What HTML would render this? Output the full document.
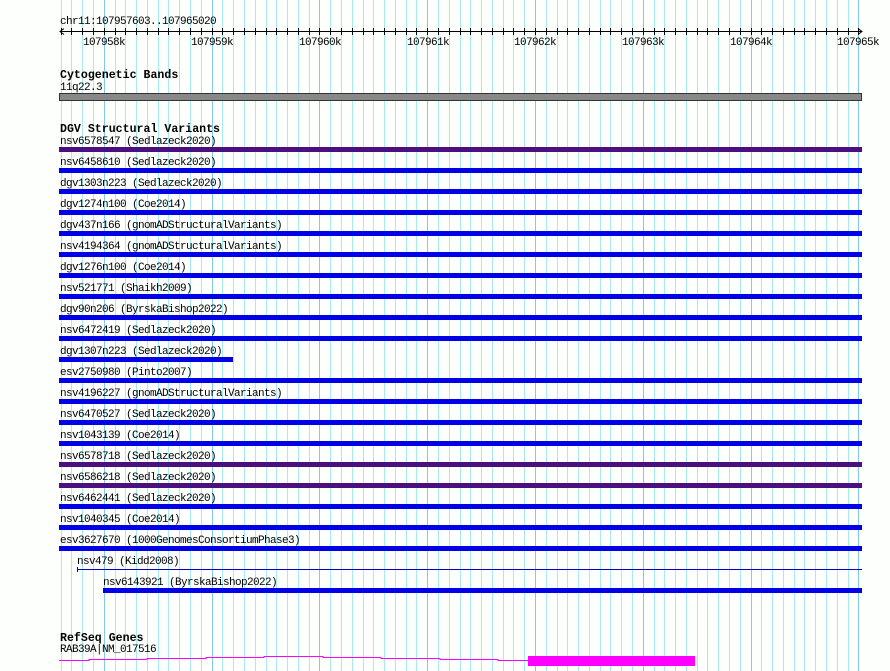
<!DOCTYPE html>
<html><head><meta charset="utf-8"><style>
html,body{margin:0;padding:0;background:#fdfffd;}
svg{display:block;}
text{font-family:"Liberation Mono","DejaVu Sans Mono",monospace;font-size:11px;letter-spacing:-0.6px;fill:#000;}
.b{font-weight:bold;font-size:11.6px;letter-spacing:0;}
</style></head><body>
<svg id="s" width="890" height="671" xmlns="http://www.w3.org/2000/svg">
<rect width="890" height="671" fill="#fdfffd"/>
<g id="grid"></g>
<text x="60" y="24">chr11:107957603..107965020</text>
<line x1="60" y1="31.5" x2="862" y2="31.5" stroke="#000"/>
<path d="M64 28.5 L60 31.5 L64 34.5 M858 28.5 L862 31.5 L858 34.5" stroke="#000" fill="none"/>
<g id="ticks"></g>
<g text-anchor="middle">
<text x="104" y="45">107958k</text>
<text x="212" y="45">107959k</text>
<text x="320" y="45">107960k</text>
<text x="428" y="45">107961k</text>
<text x="535" y="45">107962k</text>
<text x="643" y="45">107963k</text>
<text x="751" y="45">107964k</text>
<text x="858" y="45">107965k</text>
</g>
<text class="b" x="60" y="78">Cytogenetic Bands</text>
<text x="60" y="90">11q22.3</text>
<rect x="59.5" y="93.5" width="802" height="7" fill="#888" stroke="#333"/>
<text class="b" x="60" y="132">DGV Structural Variants</text>
<g>
<text x="60" y="144">nsv6578547 (Sedlazeck2020)</text><rect x="59" y="147" width="803" height="5" fill="#4b0f80"/>
<text x="60" y="165">nsv6458610 (Sedlazeck2020)</text><rect x="59" y="168" width="803" height="5" fill="#0000e6"/>
<text x="60" y="186">dgv1303n223 (Sedlazeck2020)</text><rect x="59" y="189" width="803" height="5" fill="#0000e6"/>
<text x="60" y="207">dgv1274n100 (Coe2014)</text><rect x="59" y="210" width="803" height="5" fill="#0000e6"/>
<text x="60" y="228">dgv437n166 (gnomADStructuralVariants)</text><rect x="59" y="231" width="803" height="5" fill="#0000e6"/>
<text x="60" y="249">nsv4194364 (gnomADStructuralVariants)</text><rect x="59" y="252" width="803" height="5" fill="#0000e6"/>
<text x="60" y="270">dgv1276n100 (Coe2014)</text><rect x="59" y="273" width="803" height="5" fill="#0000e6"/>
<text x="60" y="291">nsv521771 (Shaikh2009)</text><rect x="59" y="294" width="803" height="5" fill="#0000e6"/>
<text x="60" y="312">dgv90n206 (ByrskaBishop2022)</text><rect x="59" y="315" width="803" height="5" fill="#0000e6"/>
<text x="60" y="333">nsv6472419 (Sedlazeck2020)</text><rect x="59" y="336" width="803" height="5" fill="#0000e6"/>
<text x="60" y="354">dgv1307n223 (Sedlazeck2020)</text><rect x="59" y="357" width="174" height="5" fill="#0000e6"/>
<text x="60" y="375">esv2750980 (Pinto2007)</text><rect x="59" y="378" width="803" height="5" fill="#0000e6"/>
<text x="60" y="396">nsv4196227 (gnomADStructuralVariants)</text><rect x="59" y="399" width="803" height="5" fill="#0000e6"/>
<text x="60" y="417">nsv6470527 (Sedlazeck2020)</text><rect x="59" y="420" width="803" height="5" fill="#0000e6"/>
<text x="60" y="438">nsv1043139 (Coe2014)</text><rect x="59" y="441" width="803" height="5" fill="#0000e6"/>
<text x="60" y="459">nsv6578718 (Sedlazeck2020)</text><rect x="59" y="462" width="803" height="5" fill="#4b0f80"/>
<text x="60" y="480">nsv6586218 (Sedlazeck2020)</text><rect x="59" y="483" width="803" height="5" fill="#4b0f80"/>
<text x="60" y="501">nsv6462441 (Sedlazeck2020)</text><rect x="59" y="504" width="803" height="5" fill="#0000e6"/>
<text x="60" y="522">nsv1040345 (Coe2014)</text><rect x="59" y="525" width="803" height="5" fill="#0000e6"/>
<text x="60" y="543">esv3627670 (1000GenomesConsortiumPhase3)</text><rect x="59" y="546" width="803" height="5" fill="#0000e6"/>
<text x="77" y="564">nsv479 (Kidd2008)</text><rect x="77" y="569" width="785" height="1" fill="#0000cc"/><rect x="77" y="567" width="1" height="5" fill="#0000cc"/>
<text x="103" y="585">nsv6143921 (ByrskaBishop2022)</text><rect x="103" y="588" width="759" height="5" fill="#0000e6"/>
</g>
<text class="b" x="60" y="641">RefSeq Genes</text>
<text x="60" y="652">RAB39A|NM_017516</text>
<path d="M59 660.5H89V659.5H147V658.5H206V657.5H264V656.5H323V657.5H381V658.5H440V659.5H498V660.5H528" stroke="#ff00ff" fill="none"/>
<rect x="528" y="656" width="167" height="10" fill="#ff00ff"/>
</svg>
<script>
var g=document.getElementById('grid'),t=document.getElementById('ticks'),ns='http://www.w3.org/2000/svg';
for(var i=-4;i<=70;i++){var x=Math.round(103.8+i*10.78);if(x<59||x>862)continue;
var l=document.createElementNS(ns,'rect');l.setAttribute('x',x);l.setAttribute('y',0);l.setAttribute('width',1);l.setAttribute('height',671);
l.setAttribute('fill',(i%10==0)?'#84c8ea':'#a9eaee');g.appendChild(l);
var k=document.createElementNS(ns,'rect');k.setAttribute('x',x);k.setAttribute('y',28);k.setAttribute('width',1);k.setAttribute('height',7);k.setAttribute('fill','#000');t.appendChild(k);}
</script>
</body></html>
